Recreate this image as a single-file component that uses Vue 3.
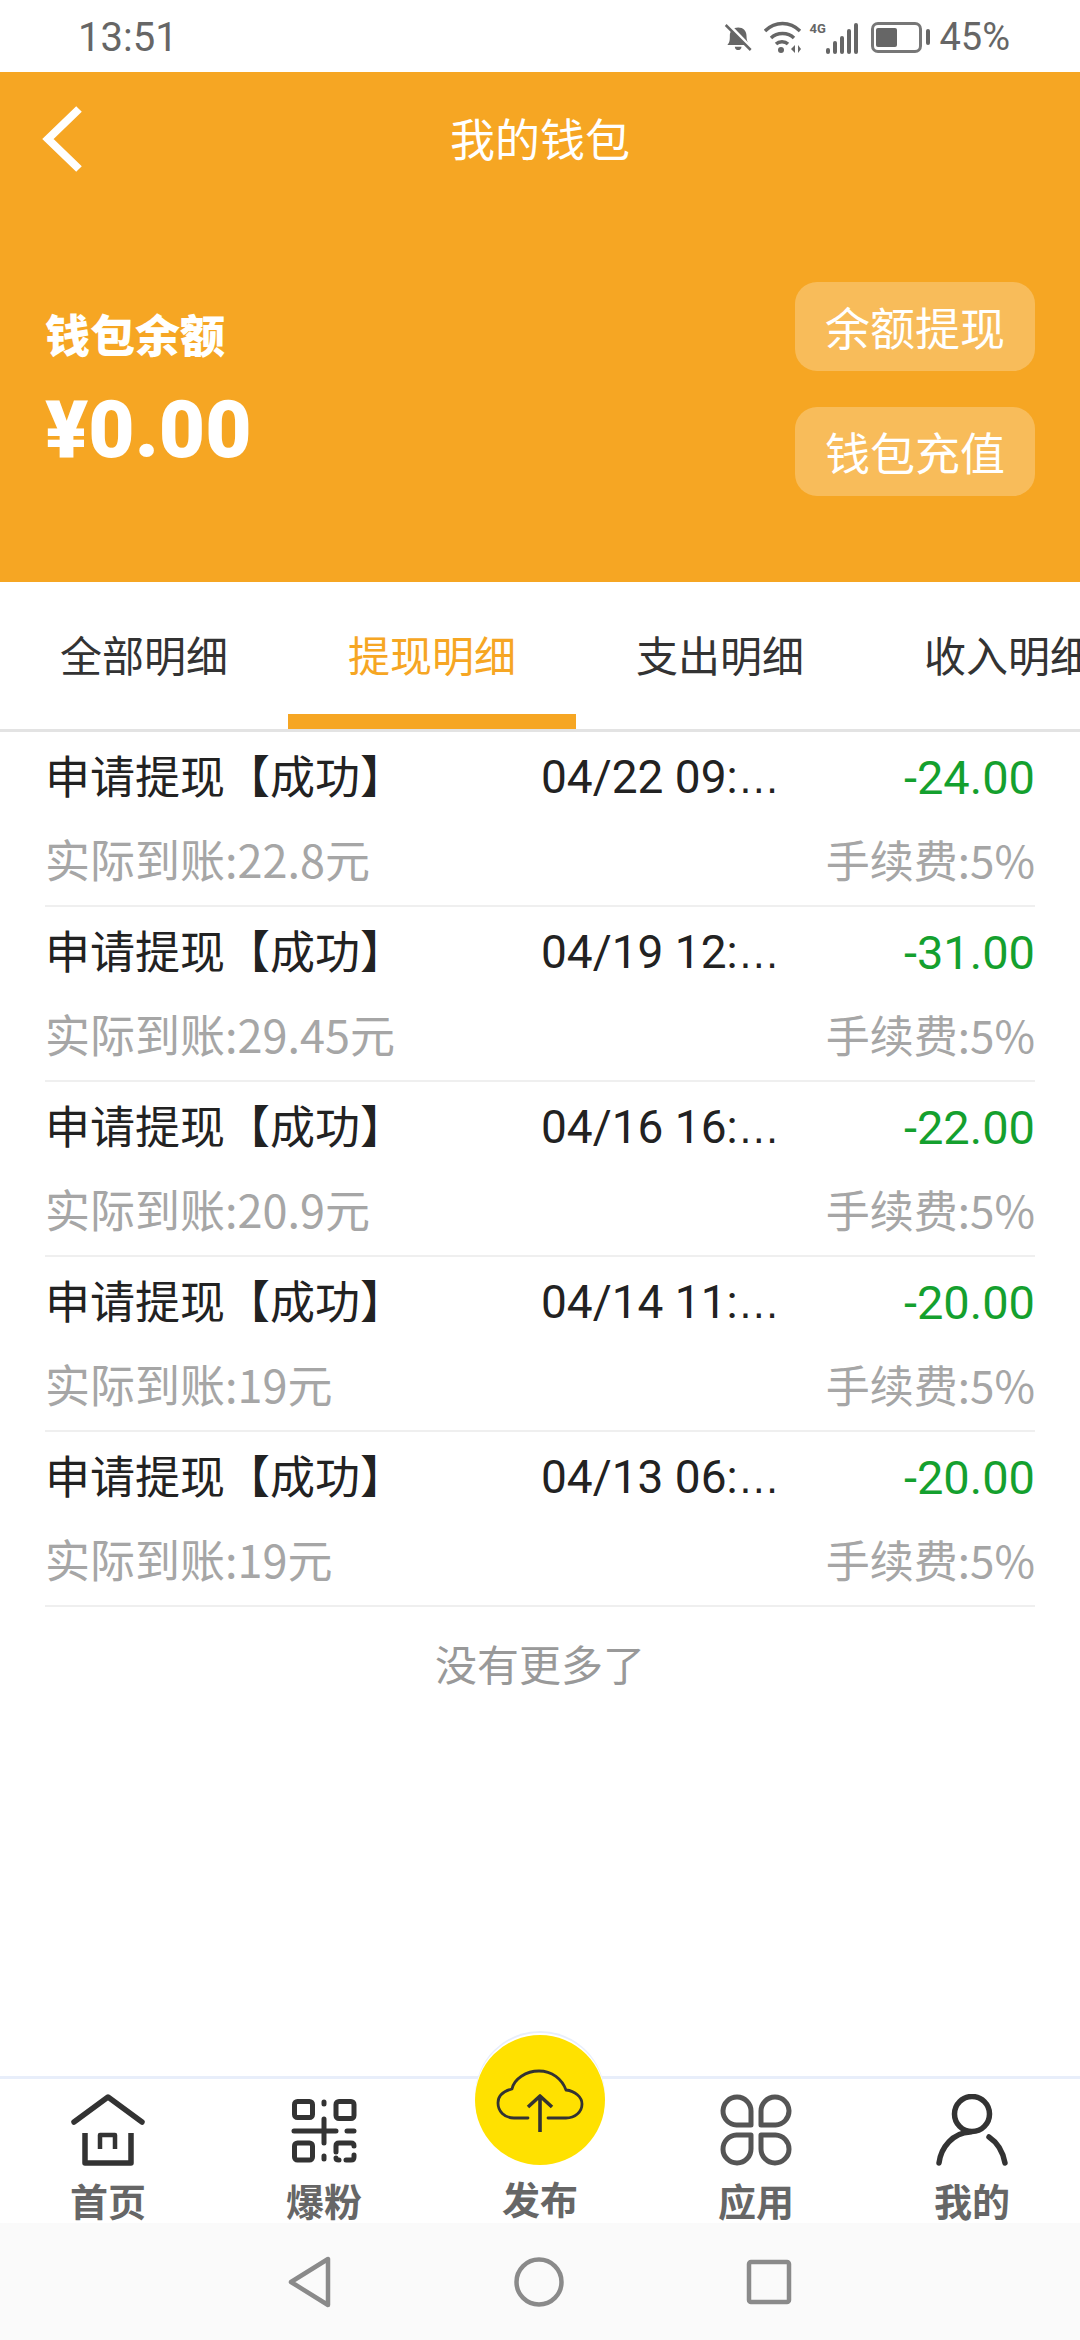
<script setup>
const rows = [
  { time: '04/22 09:', amount: '-24.00', real: '实际到账:22.8元' },
  { time: '04/19 12:', amount: '-31.00', real: '实际到账:29.45元' },
  { time: '04/16 16:', amount: '-22.00', real: '实际到账:20.9元' },
  { time: '04/14 11:', amount: '-20.00', real: '实际到账:19元' },
  { time: '04/13 06:', amount: '-20.00', real: '实际到账:19元' },
]
const tabs = ['全部明细', '提现明细', '支出明细', '收入明细']
</script>

<template>
  <div class="page">
    <div class="status">
      <span class="clock">13:51</span>
      <div class="status_right">
        <svg width="30" height="33" viewBox="0 0 36 34">
          <path d="M4 26c3-3 3-6 3-11 0-6 4-10 10-10s10 4 10 10c0 5 1 8 4 11z" fill="#666" />
          <path d="M13 28h8c0 3-2 4-4 4s-4-1-4-4z" fill="#666" />
          <path d="M5 1l29 30" stroke="#fff" stroke-width="4" />
          <path d="M2 2l30 30" stroke="#666" stroke-width="3" />
        </svg>
        <svg class="wifi" width="38" height="33" viewBox="0 0 38 33" fill="none" stroke="#666" stroke-width="3.400">
          <path d="M1 10C11 0 26 0 36 10" />
          <path d="M7 17c6-6 17-6 23 0" />
          <path d="M12 23c3-3 9-3 12 0" />
          <circle cx="17" cy="29" r="3" fill="#666" stroke="none" />
          <path d="M27 28l4-4v8zM34 24v8l3-4z" fill="#666" stroke="none" />
        </svg>
        <div class="signal">
          <span class="g4">4G</span>
          <div class="bars">
            <i style="height:6px"></i><i style="height:13px"></i><i style="height:18px"></i><i style="height:25px"></i><i style="height:31px"></i>
          </div>
        </div>
        <div class="battery">
          <div class="battery_body"><div class="battery_fill"></div></div>
          <div class="battery_cap"></div>
        </div>
        <span class="percent">45%</span>
      </div>
    </div>

    <div class="head">
      <div class="nav">
        <svg class="back" width="40" height="66" viewBox="0 0 40 66" fill="none">
          <path d="M37 3L6 33l31 30" stroke="#fff" stroke-width="8" />
        </svg>
        <span class="title">我的钱包</span>
      </div>
      <div class="wallet">
        <div class="balance">
          <div class="balance_label">钱包余额</div>
          <div class="balance_value">¥0.00</div>
        </div>
        <div class="actions">
          <div class="action">余额提现</div>
          <div class="action">钱包充值</div>
        </div>
      </div>
    </div>

    <div class="tabs">
      <div v-for="(t, i) in tabs" :key="t" :class="i === 1 ? 'tab tab_on' : 'tab'">{{ t }}</div>
    </div>

    <div class="list">
      <div v-for="r in rows" :key="r.time" class="row">
        <div class="row_top">
          <span class="row_name">申请提现【成功】</span>
          <span class="row_time">{{ r.time }}<span class="dots">…</span></span>
          <span class="row_amount">{{ r.amount }}</span>
        </div>
        <div class="row_bottom">
          <span class="row_real">{{ r.real }}</span>
          <span>手续费:5%</span>
        </div>
      </div>
    </div>
    <div class="no_more">没有更多了</div>

    <div class="tabbar">
      <div class="bar_item">
        <svg width="76" height="72" viewBox="0 0 76 72" fill="none" stroke="#333" stroke-width="5.500" stroke-linecap="round" stroke-linejoin="round">
          <path d="M4 28L38 3l34 25" />
          <path d="M15 39v30h46V39" stroke-linecap="butt" />
          <path d="M30 55V41h15v14" stroke-width="4.500" stroke-linecap="butt" />
        </svg>
        <span>首页</span>
      </div>
      <div class="bar_item">
        <svg width="76" height="72" viewBox="0 0 76 72" fill="none" stroke="#333" stroke-width="5" stroke-linecap="round">
          <rect x="8.500" y="7.500" width="18" height="16" rx="3" />
          <rect x="50" y="7.500" width="18" height="17" rx="3" />
          <rect x="8.500" y="49" width="18" height="17" rx="3" />
          <path d="M8 37h42M38 25v24M61 37h7" />
          <path d="M38 8v2M38 62v3" />
          <path d="M50 58v-6c0-2 1-3 3-3h12c2 0 3 1 3 3M50 64c0 1 1 2 3 2M60 66h5c2 0 3-1 3-3v-2" />
        </svg>
        <span>爆粉</span>
      </div>
      <div class="bar_item">
        <div class="publish_spacer"></div>
        <span>发布</span>
        <div class="publish">
          <svg width="88" height="66" viewBox="0 0 88 66" fill="none" stroke="#333" stroke-width="2.800" stroke-linecap="round" stroke-linejoin="round">
            <path d="M32 49H18C8 49 2 42 2 34c0-8 6-12 14-14C18 10 30 2 43 2c13 0 23 8 27 19 9 1 16 7 16 14 0 8-7 14-16 14H52" />
            <path d="M44 63V27M32 38l12-11 12 11" stroke-width="3.600" stroke-linecap="butt" />
          </svg>
        </div>
      </div>
      <div class="bar_item">
        <svg width="76" height="72" viewBox="0 0 76 72" fill="none" stroke="#555" stroke-width="5" stroke-linejoin="round">
          <path d="M33 31H18.500A14 14 0 1 1 33 17z" />
          <path d="M43 31h14.500A14 14 0 1 0 43 17z" />
          <path d="M33 41H18.500A14 14 0 1 0 33 55z" />
          <path d="M43 41h14.500A14 14 0 1 1 43 55z" />
        </svg>
        <span>应用</span>
      </div>
      <div class="bar_item">
        <svg width="76" height="72" viewBox="0 0 76 72" fill="none" stroke="#333" stroke-width="5.500" stroke-linecap="round">
          <circle cx="38" cy="20" r="17.500" />
          <path d="M5 69c2-16 14-30 31-31" />
          <path d="M55 43c9 6 14 15 16 26" />
        </svg>
        <span>我的</span>
      </div>
    </div>

    <div class="sysnav">
      <svg width="44" height="52" viewBox="0 0 44 52" fill="none" stroke="#8a8a8a" stroke-width="4.500" stroke-linejoin="round">
        <path d="M40 3v46L3 26z" />
      </svg>
      <svg width="50" height="50" viewBox="0 0 50 50" fill="none" stroke="#8a8a8a" stroke-width="4.500">
        <circle cx="25" cy="25" r="22.500" />
      </svg>
      <svg width="46" height="46" viewBox="0 0 46 46" fill="none" stroke="#8a8a8a" stroke-width="4.500" stroke-linejoin="round">
        <rect x="3" y="3" width="40" height="40" rx="2" />
      </svg>
    </div>
  </div>
</template>

<style>
html, body {
  margin: 0;
  background: #fff;
}
</style>

<style scoped>
.page {
  width: 1080px;
  height: 2340px;
  display: flex;
  flex-direction: column;
  overflow: hidden;
  background: #fff;
  font-family: "Noto Sans CJK SC", "Noto Sans", sans-serif;
}

.status {
  height: 72px;
  flex: none;
  display: flex;
  align-items: center;
  justify-content: space-between;
  padding: 2px 70px 0 78px;
  box-sizing: border-box;
  color: #666;
}

.clock {
  font-family: "Roboto", sans-serif;
  font-size: 40px;
}

.status_right {
  display: flex;
  align-items: center;
}

.wifi {
  margin-left: 10px;
}

.signal {
  position: relative;
  width: 49px;
  height: 33px;
  margin-left: 7px;
}

.g4 {
  position: absolute;
  left: 0;
  top: 1px;
  font-family: "Roboto", sans-serif;
  font-size: 13px;
  font-weight: 700;
  line-height: 14px;
}

.bars {
  position: absolute;
  right: 0;
  bottom: 0;
  display: flex;
  align-items: flex-end;
  gap: 3px;
}

.bars i {
  width: 4px;
  background: #666;
  border-radius: 2px;
}

.battery {
  display: flex;
  align-items: center;
  gap: 4px;
  margin-left: 13px;
}

.battery_body {
  width: 51px;
  height: 31px;
  box-sizing: border-box;
  border: 3px solid #777;
  border-radius: 7px;
  padding: 3px 2px;
}

.battery_fill {
  width: 21px;
  height: 100%;
  background: #666;
  border-radius: 2px;
}

.battery_cap {
  width: 4px;
  height: 16px;
  background: #666;
  border-radius: 2px;
}

.percent {
  font-family: "Roboto", sans-serif;
  font-size: 38px;
  margin-left: 9px;
}

.head {
  height: 510px;
  flex: none;
  background: #f6a623;
  color: #fff;
}

.nav {
  position: relative;
  height: 138px;
  display: flex;
  align-items: center;
  justify-content: center;
  padding-bottom: 8px;
  box-sizing: border-box;
}

.back {
  position: absolute;
  left: 42px;
  top: 34px;
}

.title {
  font-size: 45px;
}

.wallet {
  display: flex;
  justify-content: space-between;
  padding: 72px 45px 0 45px;
}

.balance {
  padding-top: 22px;
}

.balance_label {
  font-size: 45px;
  font-weight: 900;
  line-height: 60px;
}

.balance_value {
  font-family: "Roboto", sans-serif;
  font-size: 80px;
  font-weight: 900;
  line-height: 88px;
  margin-top: 22px;
}

.actions {
  display: flex;
  flex-direction: column;
  gap: 36px;
}

.action {
  width: 240px;
  height: 89px;
  border-radius: 22px;
  background: rgba(255, 255, 255, 0.25);
  display: flex;
  align-items: center;
  justify-content: center;
  font-size: 45px;
}

.tabs {
  height: 150px;
  flex: none;
  display: flex;
  box-sizing: border-box;
  border-bottom: 3px solid #e3e3e3;
  overflow: hidden;
  color: #333;
}

.tab {
  width: 288px;
  flex: none;
  box-sizing: border-box;
  font-size: 42px;
  text-align: center;
  line-height: 144px;
  height: 147px;
}

.tab_on {
  color: #f6a623;
  border-bottom: 15px solid #f6a623;
}

.list {
  padding: 0 45px;
}

.row {
  height: 175px;
  box-sizing: border-box;
  border-bottom: 2px solid #efefef;
}

.row_top {
  height: 90px;
  display: flex;
  align-items: center;
  font-size: 45px;
  color: #222;
}

.row_name {
  width: 496px;
  margin-top: -5px;
  flex: none;
}

.row_time {
  font-family: "Roboto", sans-serif;
  font-size: 46px;
  flex: 1;
  white-space: nowrap;
}

.dots {
  font-family: "Liberation Sans", sans-serif;
  font-size: 42px;
}

.row_amount {
  font-family: "Roboto", sans-serif;
  font-size: 47px;
  color: #14a02e;
}

.row_bottom {
  height: 73px;
  display: flex;
  align-items: center;
  justify-content: space-between;
  font-size: 44px;
  color: #a6a6a6;
}

.row_real {
  font-size: 45px;
}

.no_more {
  text-align: center;
  font-size: 42px;
  color: #999;
  line-height: 60px;
  margin-top: 26px;
}

.tabbar {
  margin-top: auto;
  height: 147px;
  flex: none;
  display: flex;
  justify-content: space-around;
  padding: 15px 0 0;
  box-sizing: border-box;
  border-top: 3px solid #e8eefa;
}

.bar_item {
  position: relative;
  width: 216px;
  display: flex;
  flex-direction: column;
  align-items: center;
  font-size: 38px;
  font-weight: 700;
  color: #666;
  line-height: 50px;
}

.bar_item span {
  margin-top: 9px;
}

.bar_item svg {
  flex: none;
}

.publish_spacer {
  height: 72px;
}

.publish {
  position: absolute;
  left: 43px;
  top: -59px;
  width: 130px;
  height: 130px;
  border-radius: 50%;
  background: #ffe100;
  box-shadow: 0 -2px 0 #fff, 0 -4px 0 #e8eefa;
  display: flex;
  align-items: center;
  justify-content: center;
}

.publish svg {
  margin-top: 4px;
}

.sysnav {
  height: 117px;
  flex: none;
  background: #fafafa;
  display: flex;
  align-items: center;
  justify-content: center;
  gap: 182px;
  position: relative;
}
</style>
